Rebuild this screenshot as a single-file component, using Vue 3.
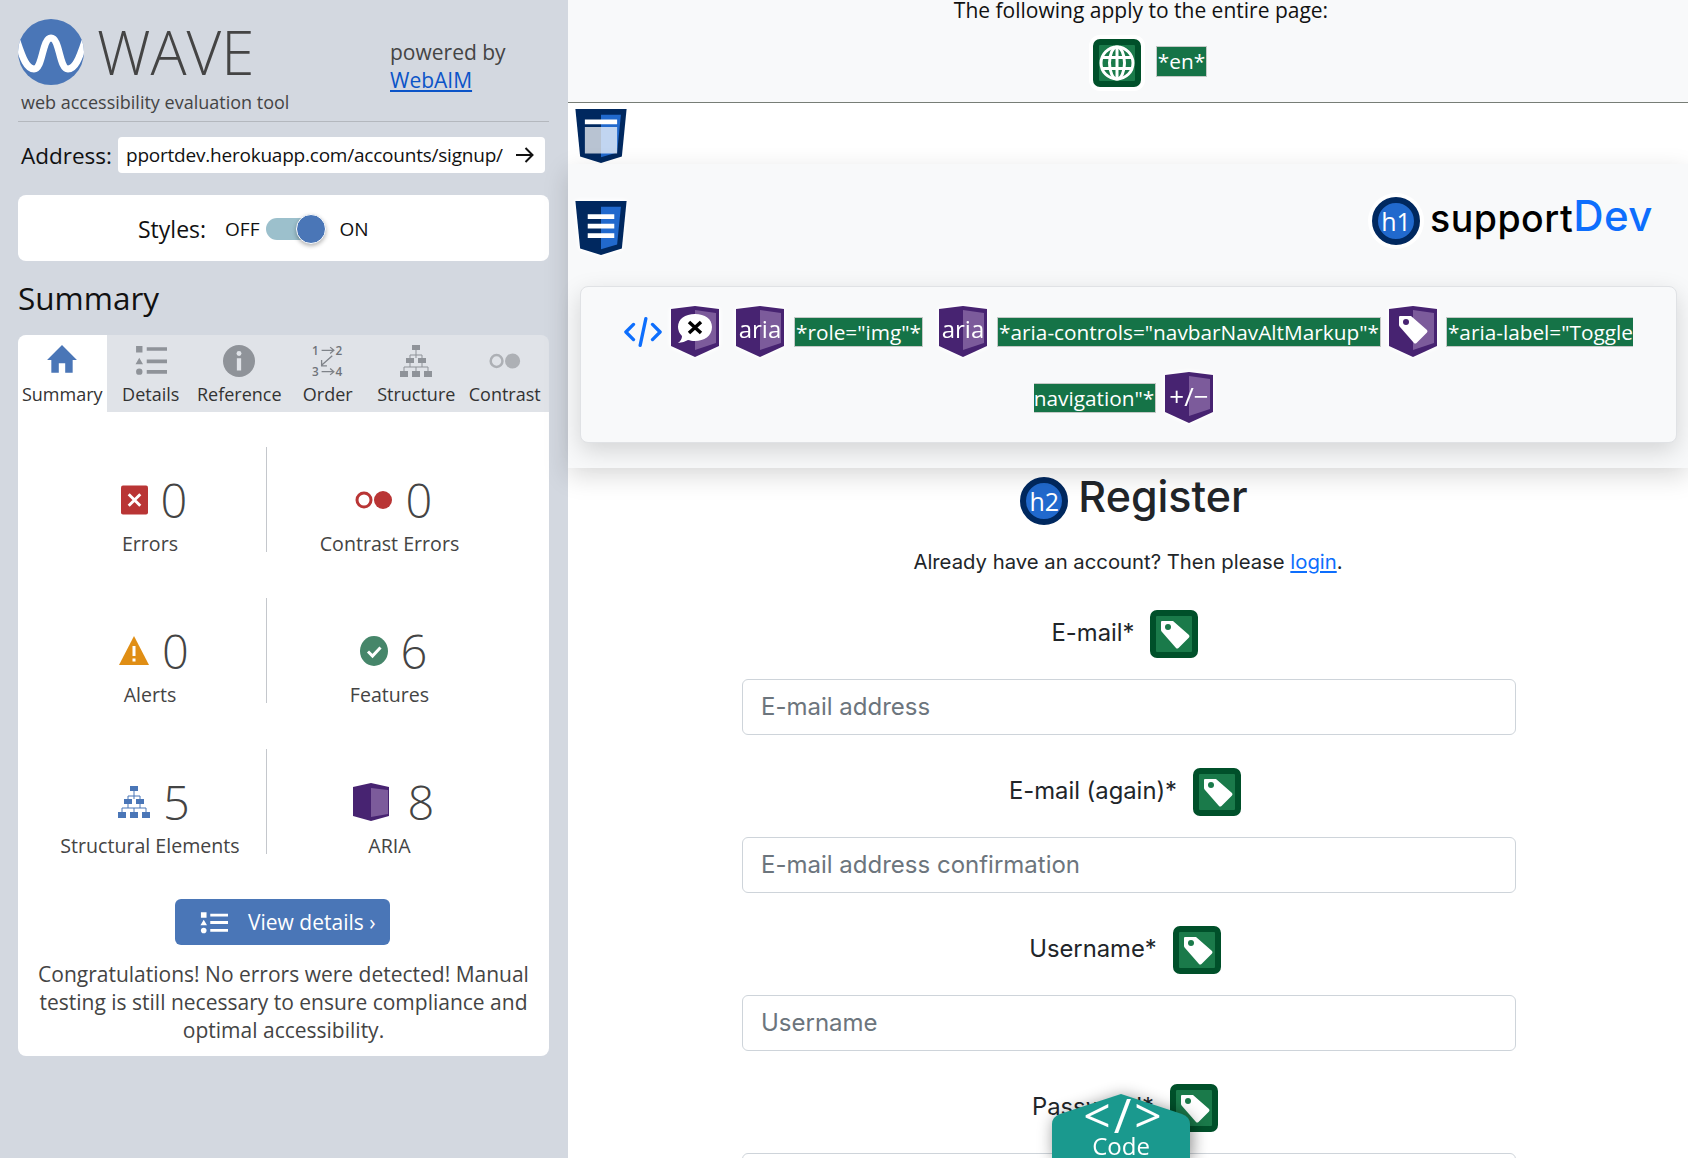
<script setup>
const tabs = [
  { id: 'i-home', label: 'Summary', active: true },
  { id: 'i-list', label: 'Details' },
  { id: 'i-info', label: 'Reference' },
  { id: 'i-order', label: 'Order' },
  { id: 'i-tree-grey', label: 'Structure' },
  { id: 'i-contrast', label: 'Contrast' }
]

const stats = [
  { id: 'i-error', count: 0, label: 'Errors', w: 27, h: 30 },
  { id: 'i-contrast-err', count: 0, label: 'Contrast Errors', w: 38, h: 22 },
  { id: 'i-alert', count: 0, label: 'Alerts', w: 30, h: 30 },
  { id: 'i-check', count: 6, label: 'Features', w: 28, h: 30 },
  { id: 'i-tree', count: 5, label: 'Structural Elements', w: 32, h: 32 },
  { id: 'i-box', count: 8, label: 'ARIA', w: 36, h: 38 }
]

const fields = [
  { label: 'E-mail*', placeholder: 'E-mail address' },
  { label: 'E-mail (again)*', placeholder: 'E-mail address confirmation' },
  { label: 'Username*', placeholder: 'Username' },
  { label: 'Password*', placeholder: 'Password' }
]
</script>

<template>
  <div class="app">
    <svg class="sprite" aria-hidden="true">
      <defs>
        <symbol id="i-home" viewBox="0 0 30 30">
          <path d="M15 0 L29 14 H25 V26 H18 V17 H12 V26 H5 V14 H1 Z" fill="#4a76b7" />
        </symbol>
        <symbol id="i-list" viewBox="0 0 30 30">
          <path d="M1 1 H7 V7 H1 Z M4 12 L7.500 18 H0.500 Z" fill="#8f9399" />
          <circle cx="4" cy="25" r="3" fill="#8f9399" />
          <path d="M11 2 H30 V5.500 H11 Z M11 13.500 H30 V17 H11 Z M11 23.500 H30 V27 H11 Z" fill="#8f9399" />
        </symbol>
        <symbol id="i-info" viewBox="0 0 30 30">
          <circle cx="15" cy="15" r="15" fill="#8f9399" />
          <path d="M13 12.500 H17 V24 H13 Z" fill="#e0e3e8" />
          <circle cx="15" cy="8" r="2.300" fill="#e0e3e8" />
        </symbol>
        <symbol id="i-order" viewBox="0 0 30 30">
          <g fill="none" stroke="#7f8389" stroke-width="1.200">
            <path d="M9 5 H20 M17 2 L20.500 5 L17 8" />
            <path d="M19 10 L9 19 M9 14 V19.500 H14" />
            <path d="M9 25 H20 M17 22 L20.500 25 L17 28" />
          </g>
          <text x="0" y="9.500" class="order-num">1</text>
          <text x="22" y="9.500" class="order-num">2</text>
          <text x="0" y="29" class="order-num">3</text>
          <text x="22" y="29" class="order-num">4</text>
        </symbol>
        <symbol id="i-tree-grey" viewBox="0 0 32 32">
          <g fill="#8f9399">
            <path d="M12 0 H20 V5 H12 Z M6 13 H14 V18 H6 Z M18 13 H26 V18 H18 Z M0 26 H8 V32 H0 Z M12 26 H20 V32 H12 Z M24 26 H32 V32 H24 Z" />
          </g>
          <path d="M16 5 V13 M10 13 V10 H22 V13 M10 18 V22 M22 18 V22 M4 26 V22 H28 V26 M16 22 V26" fill="none" stroke="#8f9399" stroke-width="1" />
        </symbol>
        <symbol id="i-tree" viewBox="0 0 32 32">
          <g fill="#4a76b7">
            <path d="M12 0 H20 V5 H12 Z M6 13 H14 V18 H6 Z M18 13 H26 V18 H18 Z M0 26 H8 V32 H0 Z M12 26 H20 V32 H12 Z M24 26 H32 V32 H24 Z" />
          </g>
          <path d="M16 5 V13 M10 13 V10 H22 V13 M10 18 V22 M22 18 V22 M4 26 V22 H28 V26 M16 22 V26" fill="none" stroke="#4a76b7" stroke-width="1" />
        </symbol>
        <symbol id="i-contrast" viewBox="0 0 38 22">
          <circle cx="9" cy="11" r="7" fill="none" stroke="#adb0b5" stroke-width="3" />
          <circle cx="28" cy="11" r="9" fill="#adb0b5" />
        </symbol>
        <symbol id="i-error" viewBox="0 0 28 30">
          <rect width="28" height="30" rx="2" fill="#b93535" />
          <path d="M8 9 L20 21 M20 9 L8 21" stroke="#fff" stroke-width="3" />
        </symbol>
        <symbol id="i-contrast-err" viewBox="0 0 38 22">
          <circle cx="9" cy="11" r="7" fill="none" stroke="#b93535" stroke-width="3" />
          <circle cx="28" cy="11" r="9" fill="#b93535" />
        </symbol>
        <symbol id="i-alert" viewBox="0 0 30 30">
          <path d="M15 0 L30 29 H0 Z" fill="#e08e14" />
          <path d="M13.500 10 H16.500 V20 H13.500 Z M13.500 22.500 H16.500 V25.500 H13.500 Z" fill="#fff" />
        </symbol>
        <symbol id="i-check" viewBox="0 0 28 30">
          <ellipse cx="14" cy="15" rx="14" ry="15" fill="#46866a" />
          <path d="M8 15.500 L12.500 20 L20.500 11.500" fill="none" stroke="#fff" stroke-width="3" />
        </symbol>
        <symbol id="i-box" viewBox="0 0 36 38">
          <path d="M0 4 L18 0 L36 4 V33 L18 38 L0 33 Z" fill="#472371" />
          <path d="M18 5 L35 7 V31 L18 34 Z" fill="#7c5b9b" />
        </symbol>
        <symbol id="i-details" viewBox="0 0 30 24">
          <path d="M1 1 H7 V7 H1 Z M4 9 L7.500 15 H0.500 Z" fill="#fff" />
          <circle cx="4" cy="20.500" r="3" fill="#fff" />
          <path d="M11 2.500 H30 V5.500 H11 Z M11 10.500 H30 V13.500 H11 Z M11 19 H30 V22 H11 Z" fill="#fff" />
        </symbol>
        <symbol id="i-tag" viewBox="0 0 32 32">
          <path d="M3 3 H14 L30 17 Q31 18 30 19.500 L19.500 30 Q18 31 17 30 L3 14 Q2 13 2 12 V4 Q2 3 3 3 Z" fill="#fff" />
        </symbol>
      </defs>
    </svg>

    <aside class="sidebar">
      <div class="brand">
        <div class="brand-left">
          <div class="logo-row">
            <svg class="logo" viewBox="0 0 66 66" aria-hidden="true">
              <clipPath id="logo-clip"><circle cx="33" cy="33" r="33" /></clipPath>
              <circle cx="33" cy="33" r="33" fill="#4a76b7" />
              <path clip-path="url(#logo-clip)" d="M-1 22 C5 40 9 50 16 50 C25 50 24 19 33 19 C42 19 41 50 50 50 C57 50 61 40 67 22" fill="none" stroke="#fff" stroke-width="7" />
            </svg>
            <span class="wave">WAVE</span>
          </div>
          <div class="tagline">web accessibility evaluation tool</div>
        </div>
        <div class="powered">powered by<br /><a href="#" class="webaim">WebAIM</a></div>
      </div>

      <div class="address">
        <label class="address-label">Address:</label>
        <div class="address-box">
          <span class="address-text">pportdev.herokuapp.com/accounts/signup/</span>
          <svg class="arrow" viewBox="0 0 18 16" aria-hidden="true">
            <path d="M0 8 H16 M9.500 1 L16.500 8 L9.500 15" fill="none" stroke="#111" stroke-width="2" />
          </svg>
        </div>
      </div>

      <div class="styles-panel">
        <span class="styles-label">Styles:</span>
        <span class="styles-off">OFF</span>
        <span class="switch"><span class="knob"></span></span>
        <span class="styles-on">ON</span>
      </div>

      <h2 class="summary-title">Summary</h2>

      <div class="tabs">
        <div v-for="t in tabs" :key="t.label" :class="['tab', { 'is-active': t.active }]">
          <svg class="tab-icon"><use :href="'#' + t.id" /></svg>
          <span>{{ t.label }}</span>
        </div>
      </div>

      <div class="summary-body">
        <div class="stats">
          <div v-for="s in stats" :key="s.label" class="stat">
            <div class="stat-top">
              <svg :width="s.w" :height="s.h"><use :href="'#' + s.id" /></svg>
              <span class="stat-count">{{ s.count }}</span>
            </div>
            <div class="stat-label">{{ s.label }}</div>
          </div>
        </div>
        <button class="view-btn">
          <svg width="28" height="23"><use href="#i-details" /></svg>
          <span>View details ›</span>
        </button>
        <p class="congrats">Congratulations! No errors were detected! Manual testing is still necessary to ensure compliance and optimal accessibility.</p>
      </div>
    </aside>

    <main class="page">
      <section class="page-wide">
        <p class="wide-title">The following apply to the entire page:</p>
        <div class="wide-row">
          <span class="green-icon">
            <svg viewBox="0 0 48 48" width="48" height="48">
              <circle cx="24" cy="24" r="16" fill="none" stroke="#fff" stroke-width="3" />
              <ellipse cx="24" cy="24" rx="7.500" ry="16" fill="none" stroke="#fff" stroke-width="3" />
              <path d="M8 18.500 H40 M8 29.500 H40" stroke="#fff" stroke-width="3" />
              <path d="M24 8 V40" stroke="#fff" stroke-width="3" />
            </svg>
          </span>
          <span class="code-tag en-tag">*en*</span>
        </div>
      </section>

      <section class="landmark">
        <svg class="shield" viewBox="0 0 54 58">
          <path d="M0 0 H54 L49 50 L27 57 L5 50 Z" fill="#00285f" />
          <path d="M27 6 H48 L44 46 L27 51 Z" fill="#2169cd" />
          <path d="M10 11 H44 V16 H10 Z" fill="#fff" />
          <path d="M10 19 H44 V47 H10 Z" fill="#fff" opacity=".72" />
        </svg>
      </section>

      <section class="nav">
        <div class="nav-top">
          <svg class="shield halo" viewBox="0 0 54 58">
            <path d="M0 0 H54 L49 50 L27 57 L5 50 Z" fill="#00285f" />
            <path d="M27 6 H48 L44 46 L27 51 Z" fill="#2169cd" />
            <path d="M13 14 H41 V19 H13 Z M13 24 H41 V29 H13 Z M13 34 H41 V39 H13 Z" fill="#fff" />
          </svg>
          <div class="brand-name">
            <span class="h-badge">h1</span>
            <span class="support">support<span class="dev">Dev</span></span>
          </div>
        </div>

        <div class="nav-card">
          <svg class="code-glyph" viewBox="0 0 40 32" aria-hidden="true">
            <path d="M10 8 L2 16 L10 24 M30 8 L38 16 L30 24 M23 2 L17 30" fill="none" stroke="#0d6efd" stroke-width="3.500" stroke-linecap="round" stroke-linejoin="round" />
          </svg>
          <svg class="aria-icon first" viewBox="0 0 50 54">
            <path d="M1 4 L25 1 L49 4 V41 L25 52 L1 41 Z" fill="#472371" />
            <path d="M25 5 L46 8 V38 L25 45 Z" fill="#7c5b9b" />
            <path d="M25 9 C35 9 42 14 42 22 C42 31 34 36 25 36 C22 36 20 35.500 18 35 Q13 38 8 38 Q12 35 12 31 Q8 27 8 22 C8 14 15 9 25 9 Z" fill="#fff" />
            <path d="M19 17 L31 28 M31 17 L19 28" stroke="#000" stroke-width="3.500" />
          </svg>
          <svg class="aria-icon gap-l" viewBox="0 0 50 54">
            <path d="M1 4 L25 1 L49 4 V41 L25 52 L1 41 Z" fill="#472371" />
            <path d="M25 5 L46 8 V38 L25 45 Z" fill="#7c5b9b" />
            <text x="25" y="33" text-anchor="middle" class="aria-text">aria</text>
          </svg>
          <span class="code-tag">*role="img"*</span>
          <svg class="aria-icon gap-l" viewBox="0 0 50 54">
            <path d="M1 4 L25 1 L49 4 V41 L25 52 L1 41 Z" fill="#472371" />
            <path d="M25 5 L46 8 V38 L25 45 Z" fill="#7c5b9b" />
            <text x="25" y="33" text-anchor="middle" class="aria-text">aria</text>
          </svg>
          <span class="code-tag">*aria-controls="navbarNavAltMarkup"*</span>
          <svg class="aria-icon tag-icon" viewBox="0 0 50 54">
            <path d="M1 4 L25 1 L49 4 V41 L25 52 L1 41 Z" fill="#472371" />
            <path d="M25 5 L46 8 V38 L25 45 Z" fill="#7c5b9b" />
            <g transform="translate(9 8)">
              <use href="#i-tag" width="32" height="32" />
              <circle cx="9" cy="9" r="3" fill="#472371" />
            </g>
          </svg>
          <span class="code-tag">*aria-label="Toggle navigation"*</span>
          <svg class="aria-icon" viewBox="0 0 50 54">
            <path d="M1 4 L25 1 L49 4 V41 L25 52 L1 41 Z" fill="#472371" />
            <path d="M25 5 L46 8 V38 L25 45 Z" fill="#7c5b9b" />
            <text x="25" y="35" text-anchor="middle" class="aria-text wide">+/−</text>
          </svg>
        </div>
      </section>

      <section class="register">
        <div class="register-head">
          <span class="h-badge">h2</span>
          <h2 class="register-title">Register</h2>
        </div>
        <p class="register-sub">Already have an account? Then please <a href="#" class="login">login</a>.</p>

        <div v-for="f in fields" :key="f.label" class="field">
          <div class="field-label">
            <label>{{ f.label }}</label>
            <span class="green-icon">
              <svg viewBox="0 0 48 48" width="48" height="48">
                <svg x="9" y="8" width="32" height="32"><use href="#i-tag" /></svg>
                <circle cx="18" cy="17" r="3" fill="#1a7a4a" />
              </svg>
            </span>
          </div>
          <input class="field-input" type="text" :placeholder="f.placeholder" />
        </div>
      </section>

      <div class="code-btn-wrap">
        <div class="code-btn">
          <span class="code-mark">&lt;/&gt;</span>
          <span class="code-word">Code</span>
        </div>
      </div>
    </main>
  </div>
</template>

<style>
html,
body {
  margin: 0;
  overflow: hidden;
}
</style>

<style scoped>
* {
  box-sizing: border-box;
}

.app {
  display: flex;
  width: 1688px;
  height: 1158px;
  overflow: hidden;
  font-family: "Open Sans", sans-serif;
  position: relative;
}

.sprite {
  position: absolute;
  width: 0;
  height: 0;
}

.order-num {
  font: 600 11px "Open Sans", sans-serif;
  fill: #6f7379;
}

.sidebar {
  width: 568px;
  flex-shrink: 0;
  background: #d3d8e0;
  padding: 0 19px 0 18px;
}

.brand {
  display: flex;
  height: 122px;
  border-bottom: 1px solid #b4b8be;
}

.brand-left {
  width: 372px;
}

.logo-row {
  display: flex;
  align-items: center;
  padding-top: 19px;
}

.logo {
  width: 66px;
  height: 66px;
}

.wave {
  margin-left: 13px;
  font-size: 60px;
  line-height: 66px;
  font-weight: 300;
  color: #444;
}

.tagline {
  margin: 5px 0 0 3px;
  font-size: 18px;
  line-height: 24px;
  color: #444;
}

.powered {
  padding-top: 38px;
  font-size: 21px;
  line-height: 28px;
  color: #444;
}

.webaim {
  color: #0b54c8;
}

.address {
  display: flex;
  align-items: center;
  margin-top: 15px;
}

.address-label {
  width: 100px;
  padding-left: 3px;
  font-size: 22.500px;
  color: #111;
}

.address-box {
  display: flex;
  align-items: center;
  justify-content: space-between;
  width: 427px;
  height: 36px;
  padding: 0 11px 0 8px;
  background: #fff;
  border-radius: 4px;
}

.address-text {
  font-size: 19px;
  letter-spacing: -.22px;
  color: #111;
  white-space: nowrap;
}

.arrow {
  width: 18px;
  height: 16px;
  flex-shrink: 0;
}

.styles-panel {
  display: flex;
  align-items: center;
  height: 66px;
  margin-top: 22px;
  padding: 2px 0 0 120px;
  background: #fff;
  border-radius: 8px;
  color: #111;
}

.styles-label {
  font-size: 23px;
  margin-right: 19px;
}

.styles-off,
.styles-on {
  font-size: 19px;
}

.switch {
  position: relative;
  width: 45px;
  height: 22px;
  margin: 0 28px 0 7px;
  background: #9cc0cc;
  border-radius: 11px;
}

.knob {
  position: absolute;
  right: -15px;
  top: -4px;
  width: 30px;
  height: 30px;
  background: #4a76b7;
  border: 1px solid #fff;
  border-radius: 50%;
  box-shadow: 0 2px 4px rgba(0, 0, 0, .3);
}

.summary-title {
  display: flex;
  align-items: center;
  height: 72px;
  margin: 0 0 2px;
  font-size: 31.500px;
  font-weight: 400;
  color: #111;
}

.tabs {
  display: flex;
  height: 77px;
  background: #e0e3e8;
  border-radius: 8px 8px 0 0;
  overflow: hidden;
}

.tab {
  flex: 1;
  display: flex;
  flex-direction: column;
  align-items: center;
  padding-top: 10px;
  font-size: 18px;
  color: #333;
}

.tab span {
  margin-top: 5px;
  white-space: nowrap;
}

.tab.is-active {
  background: #fff;
}

.tab-icon {
  width: 32px;
  height: 32px;
  flex-shrink: 0;
}

.summary-body {
  height: 644px;
  padding: 35px 16px 0;
  background: #fff;
  border-radius: 0 0 8px 8px;
}

.stats {
  display: grid;
  grid-template-columns: 233px 245px;
  grid-auto-rows: 105px;
  row-gap: 46px;
}

.stat {
  padding-top: 30px;
  text-align: center;
}

.stat:nth-child(odd) {
  border-right: 1px solid #c4c7cc;
}

.stat-top {
  display: flex;
  align-items: center;
  justify-content: center;
  gap: 13px;
  height: 46px;
  padding-left: 8px;
}

.stat:last-child .stat-top {
  gap: 19px;
}

.stat-count {
  font-size: 47px;
  line-height: 46px;
  font-weight: 300;
  color: #444;
}

.stat-label {
  margin-top: 9px;
  font-size: 19.600px;
  line-height: 24px;
  color: #444;
  white-space: nowrap;
}

.view-btn {
  display: flex;
  align-items: center;
  gap: 20px;
  width: 215px;
  height: 46px;
  margin: 45px auto 0;
  padding: 0 0 0 25px;
  position: relative;
  left: -1px;
  background: #4a76b7;
  border: 0;
  border-radius: 6px;
  color: #fff;
  font: 400 21px "Open Sans", sans-serif;
}

.congrats {
  margin: 15px 0 0;
  font-size: 21px;
  line-height: 28px;
  text-align: center;
  color: #444;
}

.page {
  flex: 1;
  min-width: 0;
  display: flex;
  flex-direction: column;
  position: relative;
  background: #fff;
}

.page > section {
  flex-shrink: 0;
}

.page-wide {
  height: 103px;
  background: #f8f9fa;
  border-bottom: 1px solid #777d76;
  padding-left: 26px;
  text-align: center;
}

.wide-title {
  margin: -4px 0 0;
  font-size: 21px;
  line-height: 28px;
  color: #111;
}

.wide-row {
  display: flex;
  justify-content: center;
  align-items: center;
  gap: 15px;
  margin-top: 15px;
  padding-left: 18px;
}

.en-tag {
  margin-top: -3px;
}

.green-icon {
  display: inline-flex;
  width: 48px;
  height: 48px;
  flex-shrink: 0;
  background: #1a7a4a;
  border: 6px solid #00502a;
  border-radius: 7px;
  box-shadow: 0 0 0 4px #fff;
  overflow: hidden;
}

.green-icon svg {
  margin: -6px;
  flex-shrink: 0;
}

.code-tag {
  background: #157347;
  color: #fff;
  border: 1px solid #c4c9c6;
  font-size: 20.800px;
  line-height: 29px;
  padding: 0 1px;
}

.landmark {
  height: 61px;
  padding: 6px 0 0 6px;
}

.shield {
  display: block;
  width: 54px;
  height: 55px;
}

.nav {
  position: relative;
  z-index: 1;
  height: 304px;
  background: #f8f9fa;
  box-shadow: 0 8px 24px rgba(0, 0, 0, .15);
}

.nav-top {
  display: flex;
  justify-content: space-between;
  height: 92px;
  padding: 37px 35px 0 6px;
}

.shield.halo {
  overflow: visible;
  filter: drop-shadow(0 0 2px #fff) drop-shadow(0 0 2px #fff);
}

.brand-name {
  display: flex;
  align-items: flex-start;
  gap: 10px;
  margin-top: -4px;
}

.h-badge {
  display: inline-flex;
  align-items: center;
  justify-content: center;
  width: 48px;
  height: 48px;
  flex-shrink: 0;
  background: #2169cd;
  border: 6px solid #00285f;
  border-radius: 50%;
  box-shadow: 0 0 0 4px #fff;
  color: #fff;
  font: 400 25px "Open Sans", sans-serif;
}

.support {
  margin-top: -2px;
  font-family: Inter, sans-serif;
  font-size: 37.500px;
  font-weight: 500;
  line-height: 44px;
  color: #000;
  letter-spacing: .5px;
}

.dev {
  position: relative;
  top: -1px;
  font-size: 42px;
  font-weight: 500;
  color: #0d6efd;
}

.nav-card {
  width: 1097px;
  height: 157px;
  margin: 30px 0 0 12px;
  padding: 12px 20px;
  background: #f8f9fa;
  border: 1px solid #e0e2e5;
  border-radius: 8px;
  box-shadow: 0 8px 24px rgba(0, 0, 0, .15);
  line-height: 66px;
  text-align: center;
  font-size: 0;
}

.code-glyph {
  width: 38px;
  height: 32px;
  vertical-align: middle;
  margin-right: 8px;
}

.aria-icon {
  width: 50px;
  height: 54px;
  vertical-align: middle;
  margin: 0 9px 0 8px;
  overflow: visible;
  filter: drop-shadow(0 0 2px #fff) drop-shadow(0 0 2px #fff);
}

.aria-icon.first {
  margin: 0;
}

.aria-icon.gap-l {
  margin-left: 15px;
}

.aria-icon.tag-icon {
  margin-left: 7px;
  margin-right: 8px;
}

.aria-text {
  font: 400 24px "Open Sans", sans-serif;
  fill: #fff;
}

.aria-text.wide {
  font-size: 26px;
}

.nav-card .code-tag {
  vertical-align: middle;
}

.register {
  display: flex;
  flex-direction: column;
  align-items: stretch;
}

.register-head {
  display: flex;
  align-items: flex-start;
  justify-content: center;
  gap: 10px;
  padding: 9px 0 0 12px;
}

.register-title {
  margin: -1px 0 1px;
  font-family: Inter, sans-serif;
  font-size: 43px;
  font-weight: 500;
  line-height: 40px;
  color: #212529;
}

.register-sub {
  margin: 24px 0 0;
  font-family: Inter, sans-serif;
  font-size: 20.300px;
  line-height: 26px;
  text-align: center;
  color: #212529;
}

.login {
  color: #0d6efd;
}

.field {
  height: 158px;
}

.register-sub + .field {
  margin-top: 35px;
}

.field-label {
  display: flex;
  justify-content: center;
  align-items: center;
  gap: 16px;
  height: 47px;
  padding-right: 6px;
  font-family: Inter, sans-serif;
  font-size: 23.800px;
  color: #212529;
}

.field-label label {
  margin-top: -3px;
}

.field-input {
  display: block;
  width: 774px;
  height: 56px;
  margin: 22px 0 0 174px;
  padding: 0 18px 2px;
  background: #fff;
  border: 1px solid #ced4da;
  border-radius: 6px;
  font: 400 24px Inter, sans-serif;
}

.field-input::placeholder {
  color: #6c757d;
  opacity: 1;
}

.code-btn-wrap {
  position: absolute;
  left: 484px;
  bottom: 0;
  z-index: 2;
  filter: drop-shadow(2px 2px 8px rgba(0, 0, 0, .45));
}

.code-btn {
  display: flex;
  flex-direction: column;
  align-items: center;
  width: 138px;
  height: 64px;
  background: #1a998e;
  color: #fff;
  clip-path: path('M0 64 V30 Q0 23 8 20 L69 0 L130 20 Q138 23 138 30 V64 Z');
}

.code-mark {
  margin-top: 2px;
  padding-left: 6px;
  font-size: 48px;
  font-weight: 500;
  line-height: 38px;
  letter-spacing: 3px;
  white-space: nowrap;
}

.code-word {
  font-size: 24px;
  line-height: 24px;
}
</style>
